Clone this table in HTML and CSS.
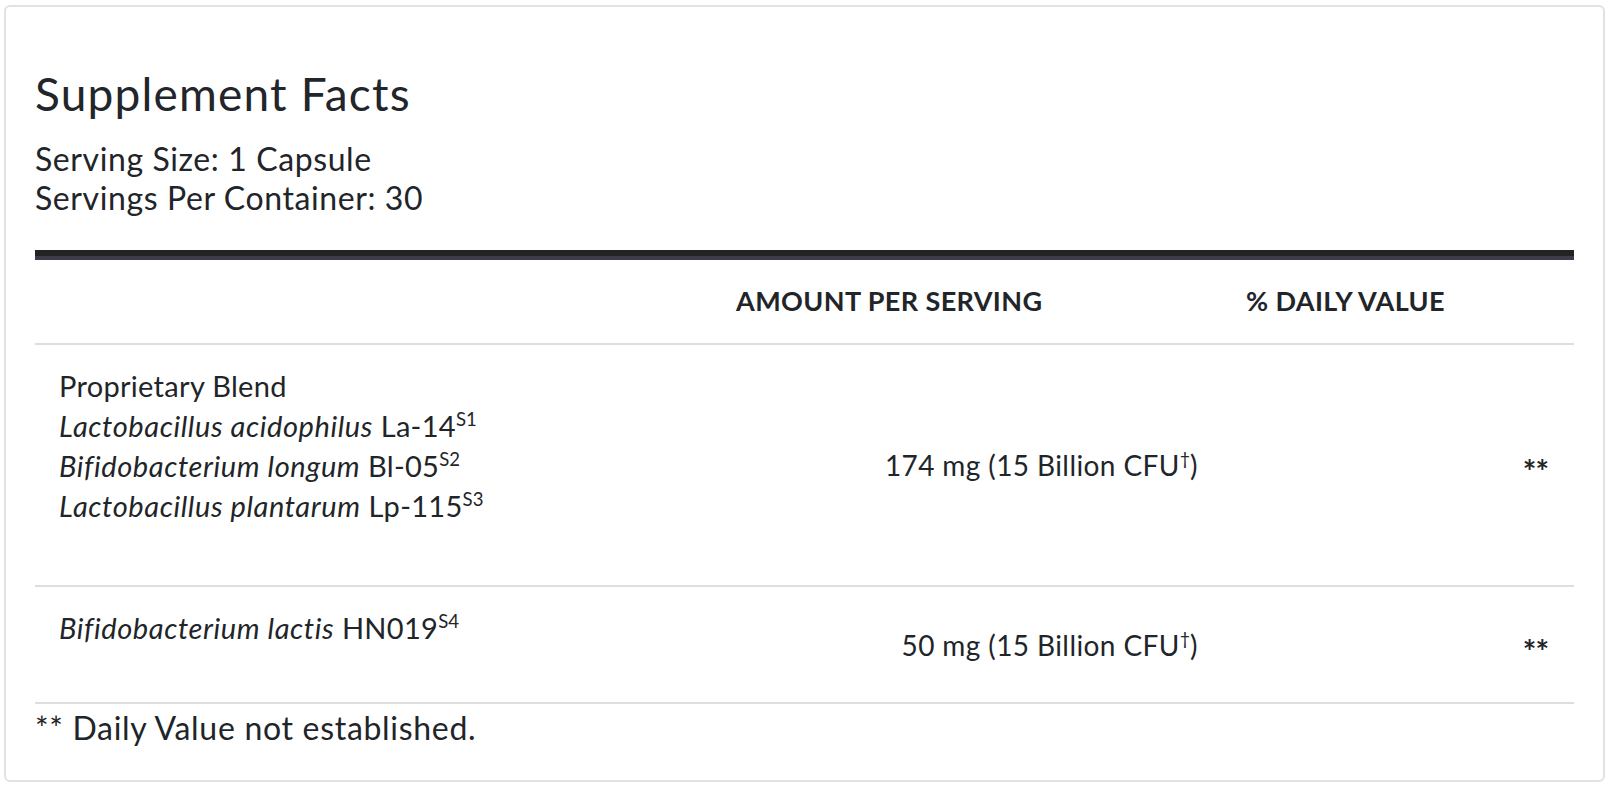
FILE: index.html
```html
<!DOCTYPE html>
<html lang="en">
<head>
<meta charset="utf-8">
<title>Supplement Facts</title>
<link rel="stylesheet" href="styles.css">
</head>
<body>
<section class="card">
  <h2 class="title">Supplement Facts</h2>
  <p class="serving">Serving Size: 1 Capsule<br>Servings Per Container: 30</p>
  <table class="facts">
    <thead>
      <tr>
        <th class="col-name"></th>
        <th class="col-amount">AMOUNT PER SERVING</th>
        <th class="col-dv">% DAILY VALUE</th>
      </tr>
    </thead>
    <tbody>
      <tr class="row-blend">
        <td class="name">
          <span class="line">Proprietary Blend</span>
          <span class="line"><i>Lactobacillus acidophilus</i> La-14<sup>S1</sup></span>
          <span class="line"><i>Bifidobacterium longum</i> Bl-05<sup>S2</sup></span>
          <span class="line"><i>Lactobacillus plantarum</i> Lp-115<sup>S3</sup></span>
        </td>
        <td class="amount">174 mg (15 Billion CFU<sup>†</sup>)</td>
        <td class="dv">**</td>
      </tr>
      <tr class="row-single">
        <td class="name">
          <span class="line"><i>Bifidobacterium lactis</i> HN019<sup>S4</sup></span>
        </td>
        <td class="amount">50 mg (15 Billion CFU<sup>†</sup>)</td>
        <td class="dv">**</td>
      </tr>
    </tbody>
  </table>
  <p class="note">** Daily Value not established.</p>
</section>
</body>
</html>
```
FILE: styles.css
```css
html, body {
  margin: 0;
  padding: 0;
  background: #ffffff;
}

body {
  font-family: "Lato", "Liberation Sans", sans-serif;
  color: #212529;
}

.card {
  margin: 5px 6px 5px 4px;
  border: 2px solid #e2e2e2;
  border-radius: 6px;
  padding: 59px 29px 30px 29px;
  box-sizing: border-box;
  height: 777px;
}

.title {
  margin: 0;
  font-size: 46px;
  font-weight: 400;
  letter-spacing: 1.2px;
  line-height: 1.2;
  color: #222529;
}

.serving {
  margin: 18px 0 0 0;
  font-size: 32px;
  letter-spacing: 0.6px;
  line-height: 39px;
}

.facts {
  width: 100%;
  margin-top: 33px;
  border-collapse: separate;
  border-spacing: 0;
  border-top: 6px solid #232323;
}

.facts th {
  box-shadow: inset 0 4px 0 #3e3b4b;
  padding: 29px 24px 26px;
  font-size: 27px;
  letter-spacing: 0.4px;
  line-height: 32px;
  font-weight: 700;
  text-align: left;
  border-bottom: 2px solid #dedede;
}

.col-name { width: 629px; }
.col-amount { width: 462px; }

.facts td {
  border-bottom: 2px solid #dedede;
  font-size: 29px;
  letter-spacing: 0.3px;
  line-height: 40px;
  padding: 0 24px;
  vertical-align: middle;
}

.facts td.name {
  padding-top: 21px;
  padding-bottom: 54px;
  vertical-align: top;
}

.facts td.name i {
  letter-spacing: 0.6px;
}

.row-blend td.name {
  padding-bottom: 59px;
}

.line {
  display: block;
}

.facts td.amount,
.facts td.dv {
  text-align: right;
}

.facts td.amount {
  font-size: 28px;
  letter-spacing: 0.4px;
}

.facts td.dv {
  font-size: 32px;
  font-weight: 700;
  letter-spacing: -1px;
  padding-top: 14px;
  padding-right: 26px;
}

sup {
  font-size: 0.64em;
  line-height: 0;
  vertical-align: 0.62em;
  letter-spacing: 0;
}

.note {
  margin: 5px 0 0 0;
  font-size: 32px;
  letter-spacing: 0.7px;
  line-height: 38px;
}
```
